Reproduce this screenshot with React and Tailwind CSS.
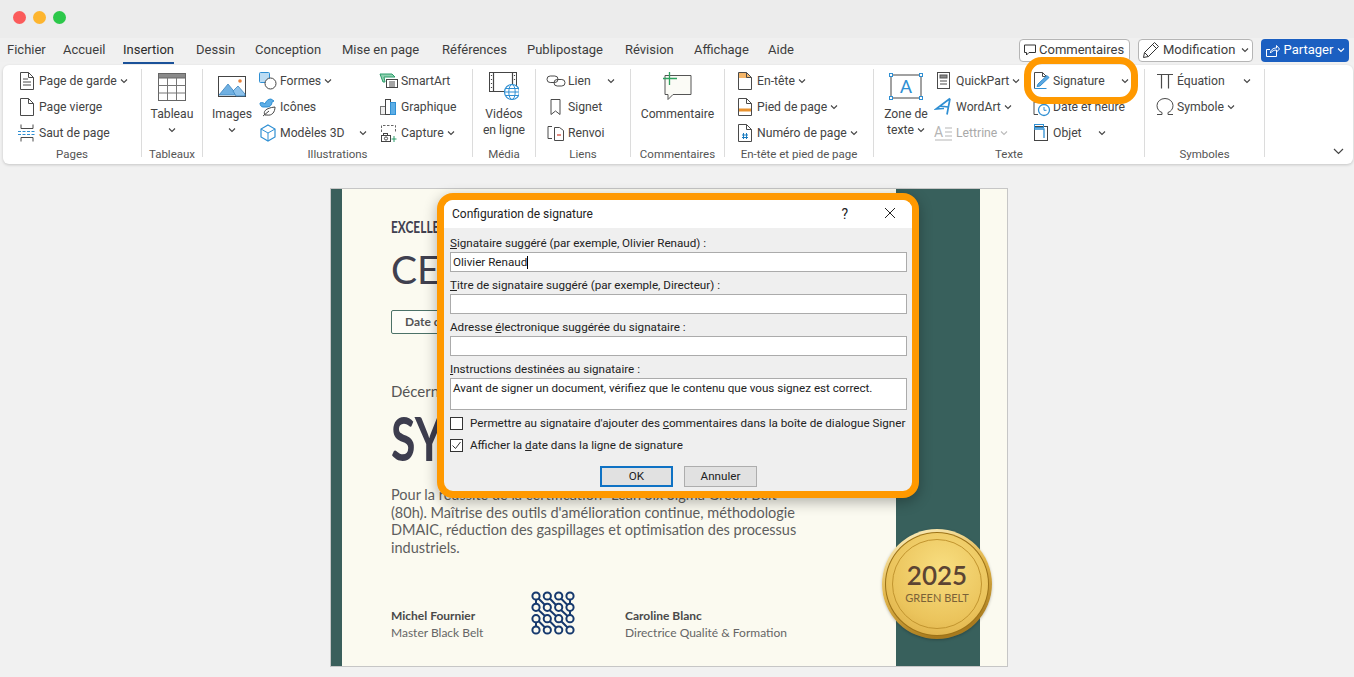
import React from "react";

const Chev = ({ cls = "", color = "#444" }) => (
  <svg width="8" height="8" viewBox="0 0 8 8" className={cls} fill="none" stroke={color} strokeWidth="1.1">
    <path d="M1 2.5 L4 5.5 L7 2.5" />
  </svg>
);

const S = ({ children, w = 20, h = 20 }) => (
  <svg width={w} height={h} viewBox={`0 0 ${w} ${h}`} fill="none" stroke="#4a4a4a" strokeWidth="1">
    {children}
  </svg>
);

const BLUE = "#2f8fd3";
const ORANGE = "#e8912d";

const doc = "M3.5 1.5h8l5 5v12h-13z";
const fold = "M11.5 1.5v5h5";
const I = {
  garde: <S><path d={doc} /><path d={fold} /><path d="M6 8h5M6 11h8M6 14h8" /></S>,
  vierge: <S><path d={doc} /><path d={fold} /></S>,
  saut: <S><path d="M4 1.5v4h12v-4M4 18.500v-4h12v4" /><path d="M1 8.500h18M1 11.500h18" stroke={BLUE} strokeDasharray="3 1.5" /></S>,
  table: (
    <S w={28} h={28}>
      <rect x="0.5" y="0.5" width="27" height="27" stroke="#666" />
      <rect x="0.5" y="0.5" width="27" height="4.5" fill="#8a8a8a" stroke="#666" />
      <path d="M9.5 5v22M18.5 5v22M0.5 12.5h27M0.5 20h27" stroke="#777" />
    </S>
  ),
  images: (
    <svg width="28" height="22" viewBox="0 0 28 22" fill="none">
      <rect x="0.5" y="0.5" width="27" height="20" stroke="#444" />
      <path d="M1 19 L10 8 L19 19z" fill="#6fb0e2" stroke="#3b83bd" strokeWidth="0.8" />
      <path d="M15 15 L20 10 L27 18 V20 H18z" fill="#8cc1ea" stroke="#3b83bd" strokeWidth="0.8" />
      <circle cx="22" cy="5" r="1.8" fill="#e8823a" />
    </svg>
  ),
  formes: (
    <S>
      <rect x="1.5" y="1.5" width="10" height="10" rx="1" fill="#bcdcf3" stroke={BLUE} />
      <circle cx="12.5" cy="12.5" r="5.5" fill="#fff" stroke="#444" />
    </S>
  ),
  icones: (
    <S>
      <path d="M2 6c2-1 4 0 5 1 1-3 3-5 6-5l3 2-2 1c0 3-2 5-5 5H5C3 10 2 8 2 6z" fill="#5daee6" stroke={BLUE} />
      <path d="M7 18c-2-3 0-7 10-8 0 5-3 9-8 8zM5 19l6-5" stroke="#444" fill="#fff" />
    </S>
  ),
  m3d: <S><path d="M10 2l7 4v8l-7 4-7-4V6z" stroke={BLUE} strokeWidth="1.2" /><path d="M3 6l7 4 7-4M10 10v8" stroke={BLUE} /></S>,
  smartart: (
    <S>
      <path d="M1 3h12l3 3H5l1 5H4z" fill="#8fd0b0" stroke="#2a9d6a" />
      <rect x="7.5" y="8.5" width="11" height="8" fill="#fff" stroke="#444" />
      <path d="M10 11h6M10 13h6M10 15h6" />
    </S>
  ),
  graph: (
    <S>
      <rect x="1.5" y="9.5" width="5" height="8" stroke="#777" fill="#eee" />
      <rect x="6.5" y="2.5" width="5" height="15" stroke="#444" fill="#fff" />
      <rect x="11.5" y="5.5" width="5" height="12" stroke={BLUE} fill="#5daee6" />
    </S>
  ),
  capture: (
    <S>
      <path d="M2.5 9V2.5h14V10" stroke="#666" strokeDasharray="2.5 1.5" />
      <rect x="2.5" y="12.5" width="9" height="6" stroke="#444" />
      <rect x="4.5" y="10.5" width="4" height="2" stroke="#444" />
      <circle cx="7" cy="15.5" r="1.6" />
      <path d="M15 13v6M12.5 16h5" stroke="#2a9d6a" />
    </S>
  ),
  video: (
    <svg width="30" height="30" viewBox="0 0 30 30" fill="none" stroke="#444">
      <rect x="0.5" y="0.5" width="27" height="19" />
      <path d="M4.5 1v19M23.5 1v19M2.5 3v1M2.5 7v1M2.5 11v1M2.5 15v1M25.5 3v1M25.5 7v1" strokeWidth="1.2" />
      <circle cx="23" cy="20" r="7.5" fill="#fff" stroke={BLUE} strokeWidth="1.2" />
      <ellipse cx="23" cy="20" rx="3.2" ry="7.5" stroke={BLUE} />
      <path d="M15.5 20h15M16.5 16.5h13M16.5 23.5h13" stroke={BLUE} />
    </svg>
  ),
  lien: <S><rect x="1" y="5" width="11" height="6.5" rx="3.2" /><rect x="8" y="8.5" width="11" height="6.5" rx="3.2" /></S>,
  signet: <S><path d="M5 2.5h9v15l-4.5-3.5L5 17.500z" /></S>,
  renvoi: (
    <S>
      <path d="M6 3.500H2v12h4" />
      <path d="M8.500 4.500h5l4 3v10h-9z" />
      <path d="M11 12h4" stroke="#d04030" strokeWidth="1.2" />
    </S>
  ),
  comment: (
    <svg width="30" height="30" viewBox="0 0 30 30" fill="none">
      <path d="M3 3.500h26v19H11l-5 5v-5H3z" stroke="#555" fill="#fbfbf6" />
      <path d="M7.500 0v13M1 6.500h14" stroke="#2fa15f" strokeWidth="1.3" />
    </svg>
  ),
  entete: <S><path d="M4 7h12V6.500L11.500 2H4z" fill="#f4b66a" stroke="none" /><path d={doc} /><path d={fold} /></S>,
  pied: <S><path d={doc} /><path d={fold} /><rect x="4" y="11.500" width="12" height="3" fill={ORANGE} stroke="none" /></S>,
  numero: (
    <S>
      <path d={doc} />
      <path d={fold} />
      <path d="M8.500 10v6M11.500 10v6M7 12h6M7 14.500h6" stroke="#1b7cc0" />
    </S>
  ),
  zone: (
    <svg width="34" height="27" viewBox="0 0 34 27" fill="none">
      <rect x="2" y="2" width="30" height="23" stroke="#444" />
      {[[2, 2], [32, 2], [2, 25], [32, 25]].map(([x, y]) => (
        <rect key={`${x}${y}`} x={x - 1.5} y={y - 1.5} width="3" height="3" fill="#fff" stroke={BLUE} />
      ))}
      <text x="17" y="20" textAnchor="middle" fontSize="19" fill={BLUE} stroke="none" fontFamily="Roboto, sans-serif">A</text>
    </svg>
  ),
  quick: <S><rect x="3.500" y="1.500" width="12" height="16" /><rect x="6" y="4" width="7" height="3" fill="#888" stroke="#555" /><path d="M6 10h7M6 13h7" /></S>,
  wordart: <S><path d="M16 1.500L2 12l7-.5 1 0M16 1.500l-3 16M6 9l8 1" stroke={BLUE} strokeWidth="1.7" /></S>,
  lettrine: (
    <svg width="20" height="20" viewBox="0 0 20 20" fill="none" stroke="#b5b5b5">
      <text x="0" y="14" fontSize="14" fill="#b5b5b5" stroke="none" fontFamily="Roboto, sans-serif">A</text>
      <path d="M11 5h7M11 9h7M11 13h7M1 17h17" />
    </svg>
  ),
  signature: (
    <S>
      <path d="M3.500 17.500V1.500h8l4 4V8" />
      <path d="M11.500 1.500v4h4" />
      <path d="M7 13L16 4.500l2 2L9 15l-3 .5z" fill="#5fa8e0" stroke={BLUE} />
      <path d="M3.500 17.500h12" stroke={BLUE} />
    </S>
  ),
  date: (
    <S>
      <path d="M7 17.500H3V5h5" />
      <circle cx="13" cy="13" r="5.500" fill="#fff" stroke={BLUE} strokeWidth="1.3" />
      <path d="M13 10v3.300h2.500" stroke={BLUE} />
    </S>
  ),
  objet: <S><rect x="3.500" y="3.500" width="13" height="14" stroke="#444" /><rect x="3.500" y="1.500" width="9" height="3" stroke={BLUE} /><path d="M3 6h10v9" stroke={BLUE} strokeWidth="1.3" /></S>,
  pi: <S><path d="M2 3.500h16M6.500 3.500v14M13.500 3.500v14" strokeWidth="1.2" /></S>,
  omega: <S><path d="M2 17.500h5v-2c-3-1-5-3.500-5-7a8 7 0 0 1 16 0c0 3.500-2 6-5 7v2h5" /></S>,
};

const Item = ({ icon, label, chev, chevCls = "ml-[3px]", gray }) => (
  <div className={`flex items-center h-[26px] pt-[2px] ${gray ? "text-[#a9a9a9]" : "text-[#444]"}`}>
    <span className="w-[20px] h-[20px] mr-[2px] flex items-center justify-center shrink-0">{icon}</span>
    <span className="whitespace-nowrap">{label}</span>
    {chev && <Chev cls={chevCls} color={gray ? "#bbb" : "#444"} />}
  </div>
);

const Large = ({ icon, lines, chev, cls = "" }) => (
  <div className={`flex flex-col items-center text-[#444] ${cls}`}>
    <div className="h-[39px] flex items-center justify-center">{icon}</div>
    {lines.map((l) => (
      <div key={l} className="h-[16px] leading-[16px] whitespace-nowrap flex items-center">{l}</div>
    ))}
    {chev && <Chev cls="mt-[4px]" />}
  </div>
);

const Group = ({ label, w, pl = "pl-0", children }) => (
  <div className={`flex flex-col shrink-0 ${w}`}>
    <div className={`h-[78px] flex ${pl}`}>{children}</div>
    <div className="h-[18px] leading-[18px] text-center text-[11.5px] text-[#555] whitespace-nowrap">{label}</div>
  </div>
);

const Sep = () => <div className="w-px h-[88px] mt-[2px] bg-[#dcdcdc] shrink-0" />;

const Logo = () => {
  const p = [5, 16.3, 27.7, 39];
  return (
    <svg width="44" height="44" viewBox="0 0 44 44" fill="none" stroke="#16396e" strokeWidth="2">
      {p.map((y) => p.map((x) => <circle key={`${x}-${y}`} cx={x} cy={y} r="3.6" />))}
      <path d="M7.500 7.500L14 14M18.800 7.500L25 14M30 7.500L36.500 14M7.500 19L14 25M18.500 19L25 25M30 19L36.500 25M7.500 30L14 36.500M18.500 30L25 36.500M30 30L36.500 36.500M5 8.500v4M39 19.500v4M5 31v4M39 8.500v4" />
    </svg>
  );
};

const Field = ({ label, children, h = "h-[20px]", mt = "mt-[6px]" }) => (
  <div className={mt}>
    <div className="h-[14px] leading-[14px] mb-[2px] whitespace-nowrap">{label}</div>
    <div className={`${h} bg-white border border-[#ababab] px-[2px] leading-[18px] whitespace-nowrap`}>{children}</div>
  </div>
);

const tabs = [
  ["Fichier", "w-[56px]"],
  ["Accueil", "w-[60px]"],
  ["Insertion", "w-[73px]"],
  ["Dessin", "w-[59px]"],
  ["Conception", "w-[87px]"],
  ["Mise en page", "w-[100px]"],
  ["Références", "w-[85px]"],
  ["Publipostage", "w-[98px]"],
  ["Révision", "w-[69px]"],
  ["Affichage", "w-[74px]"],
  ["Aide", "w-[40px]"],
];

export default function App() {
  return (
    <div className="relative w-[1354px] h-[677px] overflow-hidden bg-[#f1f1f1] font-['Roboto',sans-serif] text-[12.2px]">
      {/* Title bar */}
      <div className="h-[38px] bg-[#ececec] flex items-center gap-[7px] pl-[13px] pb-[4px]">
        <span className="w-[13px] h-[13px] rounded-full bg-[#fb5b5b]" />
        <span className="w-[13px] h-[13px] rounded-full bg-[#fdb52f]" />
        <span className="w-[13px] h-[13px] rounded-full bg-[#2cc84a]" />
      </div>

      {/* Tabs */}
      <div className="h-[24px] flex items-center pl-[7px] pr-[5px] bg-[#f0f0f0] text-[13px] text-[#3d3d3d]">
        <div className="flex">
          {tabs.map(([t, w]) => (
            <div key={t} className={`whitespace-nowrap ${w}`}>
              <span className={`relative inline-block ${t === "Insertion" ? "text-[#2b2b2b]" : ""}`}>
                {t}
                {t === "Insertion" && <span className="absolute left-0 right-0 bottom-[-4px] h-[2px] bg-[#1a5199]" />}
              </span>
            </div>
          ))}
        </div>
        <div className="ml-auto flex gap-[8px] h-[23px]">
          <div className="w-[111px] flex items-center pl-[3px] gap-[2px] bg-white border border-[#b5b5b5] rounded-[4px]">
            <svg width="14" height="14" viewBox="0 0 14 14" fill="none" stroke="#333"><path d="M1.500 2h11v7.500H6L3.500 12V9.500h-2z" /></svg>
            Commentaires
          </div>
          <div className="w-[115px] flex items-center pl-[3px] gap-[3px] bg-white border border-[#b5b5b5] rounded-[4px]">
            <svg width="18" height="18" viewBox="0 0 18 18" fill="none" stroke="#333"><path d="M1.500 16.500l1-5L12.500 1.500l4 4-10 10zM10.500 3.500l4 4M2.500 11.500l4 4" /></svg>
            Modification
            <Chev cls="ml-[3px]" />
          </div>
          <div className="w-[88px] flex items-center justify-center gap-[4px] bg-[#1b5fc1] rounded-[4px] text-white">
            <svg width="15" height="15" viewBox="0 0 15 15" fill="none" stroke="#fff"><path d="M5 6.500H1.500v7h10V9M5.500 10c0-3 2.500-5 6-5V2.500l3 3.500-3 3V7c-2.500 0-4.500 1-6 3z" /></svg>
            Partager
            <Chev color="#fff" />
          </div>
        </div>
      </div>

      {/* Ribbon */}
      <div className="flex h-[99px] ml-[3px] mr-[1px] mt-[3px] pt-[2px] bg-white rounded-[6px] shadow-[0_1px_3px_rgba(0,0,0,0.18)]">
        <Group label="Pages" w="w-[138px]" pl="pl-[14px]">
          <div>
            <Item icon={I.garde} label="Page de garde" chev />
            <Item icon={I.vierge} label="Page vierge" />
            <Item icon={I.saut} label="Saut de page" />
          </div>
        </Group>
        <Sep />
        <Group label="Tableaux" w="w-[60px]" pl="justify-center">
          <Large icon={I.table} lines={["Tableau"]} chev />
        </Group>
        <Sep />
        <Group label="Illustrations" w="w-[269px]" pl="pl-[9px]">
          <Large icon={I.images} lines={["Images"]} chev cls="w-[40px]" />
          <div className="w-[121px] ml-[6px]">
            <Item icon={I.formes} label="Formes" chev />
            <Item icon={I.icones} label="Icônes" />
            <Item icon={I.m3d} label="Modèles 3D" chev chevCls="ml-[14px]" />
          </div>
          <div>
            <Item icon={I.smartart} label="SmartArt" />
            <Item icon={I.graph} label="Graphique" />
            <Item icon={I.capture} label="Capture" chev />
          </div>
        </Group>
        <Sep />
        <Group label="Média" w="w-[62px]" pl="justify-center">
          <Large icon={I.video} lines={["Vidéos", "en ligne"]} />
        </Group>
        <Sep />
        <Group label="Liens" w="w-[94px]" pl="pl-[10px]">
          <div>
            <Item icon={I.lien} label="Lien" chev chevCls="ml-[16px]" />
            <Item icon={I.signet} label="Signet" />
            <Item icon={I.renvoi} label="Renvoi" />
          </div>
        </Group>
        <Sep />
        <Group label="Commentaires" w="w-[93px]" pl="justify-center">
          <Large icon={I.comment} lines={["Commentaire"]} />
        </Group>
        <Sep />
        <Group label="En-tête et pied de page" w="w-[148px]" pl="pl-[10px]">
          <div>
            <Item icon={I.entete} label="En-tête" chev />
            <Item icon={I.pied} label="Pied de page" chev />
            <Item icon={I.numero} label="Numéro de page" chev />
          </div>
        </Group>
        <Sep />
        <Group label="Texte" w="w-[270px]" pl="pl-[10px]">
          <div className="flex flex-col items-center w-[44px] text-[#444]">
            <div className="h-[39px] flex items-center justify-center">{I.zone}</div>
            <div className="h-[16px] leading-[16px] whitespace-nowrap">Zone de</div>
            <div className="h-[16px] leading-[16px] whitespace-nowrap flex items-center">texte<Chev cls="ml-[3px]" /></div>
          </div>
          <div className="w-[97px] ml-[6px]">
            <Item icon={I.quick} label="QuickPart" chev />
            <Item icon={I.wordart} label="WordArt" chev />
            <Item icon={I.lettrine} label="Lettrine" chev gray />
          </div>
          <div>
            <Item icon={I.signature} label="Signature" chev chevCls="ml-[16px]" />
            <Item icon={I.date} label="Date et heure" />
            <Item icon={I.objet} label="Objet" chev chevCls="ml-[16px]" />
          </div>
        </Group>
        <Sep />
        <Group label="Symboles" w="w-[119px]" pl="pl-[10px]">
          <div>
            <Item icon={I.pi} label="Équation" chev chevCls="ml-[18px]" />
            <Item icon={I.omega} label="Symbole" chev />
          </div>
        </Group>
        <Sep />
        <div className="flex-1 flex items-end justify-end pr-[9px] pb-[9px]">
          <svg width="11" height="7" viewBox="0 0 11 7" fill="none" stroke="#444" strokeWidth="1.2"><path d="M1 1l4.500 4.500L10 1" /></svg>
        </div>
      </div>

      {/* Document */}
      <div className="relative flex w-[678px] h-[479px] ml-[330px] mt-[24px] border border-[#c6c6c6] text-[#555] font-['Lato',sans-serif]">
        <div className="w-[11px] bg-[#3a5f5b]" />
        <div className="w-[554px] bg-[#fbfaf0] pl-[49px]">
          <div className="mt-[31px] h-[14px] leading-[14px] text-[17px] font-bold text-[#40404f] scale-x-[0.7] origin-left">EXCELLE</div>
          <div className="mt-[15px] h-[40px] leading-[40px] text-[39px] text-[#40404f]">CE</div>
          <div className="mt-[21px] h-[24px] w-[70px] border border-[#4c7268] rounded-[2px] pl-[13px] leading-[22px] text-[12px] font-bold text-[#555] bg-[#fdfdf8]">Date d</div>
          <div className="mt-[47px] h-[20px] leading-[20px] text-[15px]">Décern</div>
          <div className="mt-[6px] h-[60px] leading-[60px] text-[62px] font-bold text-[#3d3d4e] scale-x-[0.72] origin-left">SY</div>
          <div className="mt-[19px] w-[430px] text-[14.500px] leading-[17.500px] text-[#5e5e5e]">
            Pour la réussite de la certification "Lean Six Sigma Green Belt" (80h). Maîtrise des outils d'amélioration continue, méthodologie DMAIC, réduction des gaspillages et optimisation des processus industriels.
          </div>
          <div className="mt-[35px] flex">
            <div className="w-[140px] pt-[16px] leading-[17px] text-[12px]">
              <div className="font-bold text-[#4a4a4a]">Michel Fournier</div>
              <div className="text-[#666]">Master Black Belt</div>
            </div>
            <div className="w-[94px]"><Logo /></div>
            <div className="pt-[16px] leading-[17px] text-[12px]">
              <div className="font-bold text-[#4a4a4a]">Caroline Blanc</div>
              <div className="text-[#666]">Directrice Qualité &amp; Formation</div>
            </div>
          </div>
        </div>
        <div className="w-[84px] bg-[#38605c]" />
        <div className="flex-1 bg-[#fbfaf0]" />

        {/* Medal */}
        <div className="absolute left-[551px] top-[340px] w-[110px] h-[110px] rounded-full bg-[linear-gradient(160deg,#fff6cf,#e2b64a_45%,#a87a1e_85%)] p-[3px] shadow-[0_1px_3px_rgba(0,0,0,0.25)]">
          <div className="w-full h-full rounded-full bg-[#9c7217] p-[1px]">
            <div className="w-full h-full rounded-full bg-[radial-gradient(circle_at_55%_35%,#f8de80,#ebc45c_60%,#d6a53e)] p-[6px]">
              <div className="w-full h-full rounded-full border border-[#c2952f] flex flex-col items-center justify-center pb-[3px]">
                <div className="text-[26px] leading-[30px] font-semibold text-[#5c4433]">2025</div>
                <div className="text-[11px] leading-[14px] mt-[1px] text-[#7a6238]">GREEN BELT</div>
              </div>
            </div>
          </div>
        </div>
      </div>

      {/* Dialog */}
      <div className="absolute left-[437px] top-[193px] w-[482px] h-[305px] border-[7px] border-[#ff9900] rounded-[16px] bg-[#efefef] overflow-hidden shadow-[0_4px_14px_rgba(0,0,0,0.3)] text-[11.65px] text-[#222] font-['Roboto',sans-serif]">
        <div className="h-[28px] bg-white flex items-center pl-[8px] text-[12px]">
          <span>Configuration de signature</span>
          <span className="ml-auto mr-[36px] text-[14px]">?</span>
          <svg width="12" height="12" viewBox="0 0 12 12" className="mr-[16px] mb-[2px]" stroke="#222" fill="none"><path d="M1 1l10 10M11 1L1 11" /></svg>
        </div>
        <div className="pl-[6px] pr-[5px]">
          <Field mt="mt-[8px]" label={<><u>S</u>ignataire suggéré (par exemple, Olivier Renaud) :</>}>
            Olivier Renaud<span className="inline-block w-px h-[13px] bg-black align-middle" />
          </Field>
          <Field label={<><u>T</u>itre de signataire suggéré (par exemple, Directeur) :</>} />
          <Field label={<>Adresse <u>é</u>lectronique suggérée du signataire :</>} />
          <Field h="h-[32px]" label={<><u>I</u>nstructions destinées au signataire :</>}>
            Avant de signer un document, vérifiez que le contenu que vous signez est correct.
          </Field>
          <div className="mt-[7px] h-[13px] flex items-center whitespace-nowrap">
            <span className="w-[13px] h-[13px] border border-[#333] bg-white mr-[7px] shrink-0" />
            <span>Permettre au signataire d'ajouter des <u>c</u>ommentaires dans la boîte de dialogue Signer</span>
          </div>
          <div className="mt-[9px] h-[13px] flex items-center whitespace-nowrap">
            <span className="w-[13px] h-[13px] border border-[#333] bg-white mr-[7px] shrink-0 flex items-center justify-center">
              <svg width="11" height="11" viewBox="0 0 11 11" fill="none" stroke="#333"><path d="M1.500 5.500l3 3 5-6.500" /></svg>
            </span>
            <span>Afficher la <u>d</u>ate dans la ligne de signature</span>
          </div>
          <div className="mt-[14px] flex gap-[11px] pl-[150px]">
            <div className="w-[73px] h-[21px] border-2 border-[#0f72c4] bg-[#e1e1e1] flex items-center justify-center">OK</div>
            <div className="w-[73px] h-[21px] border border-[#adadad] bg-[#e1e1e1] flex items-center justify-center">Annuler</div>
          </div>
        </div>
      </div>

      {/* Signature highlight */}
      <div className="absolute left-[1024px] top-[57px] w-[114px] h-[47px] border-[7px] border-[#ff9900] rounded-[18px] pointer-events-none" />
    </div>
  );
}
